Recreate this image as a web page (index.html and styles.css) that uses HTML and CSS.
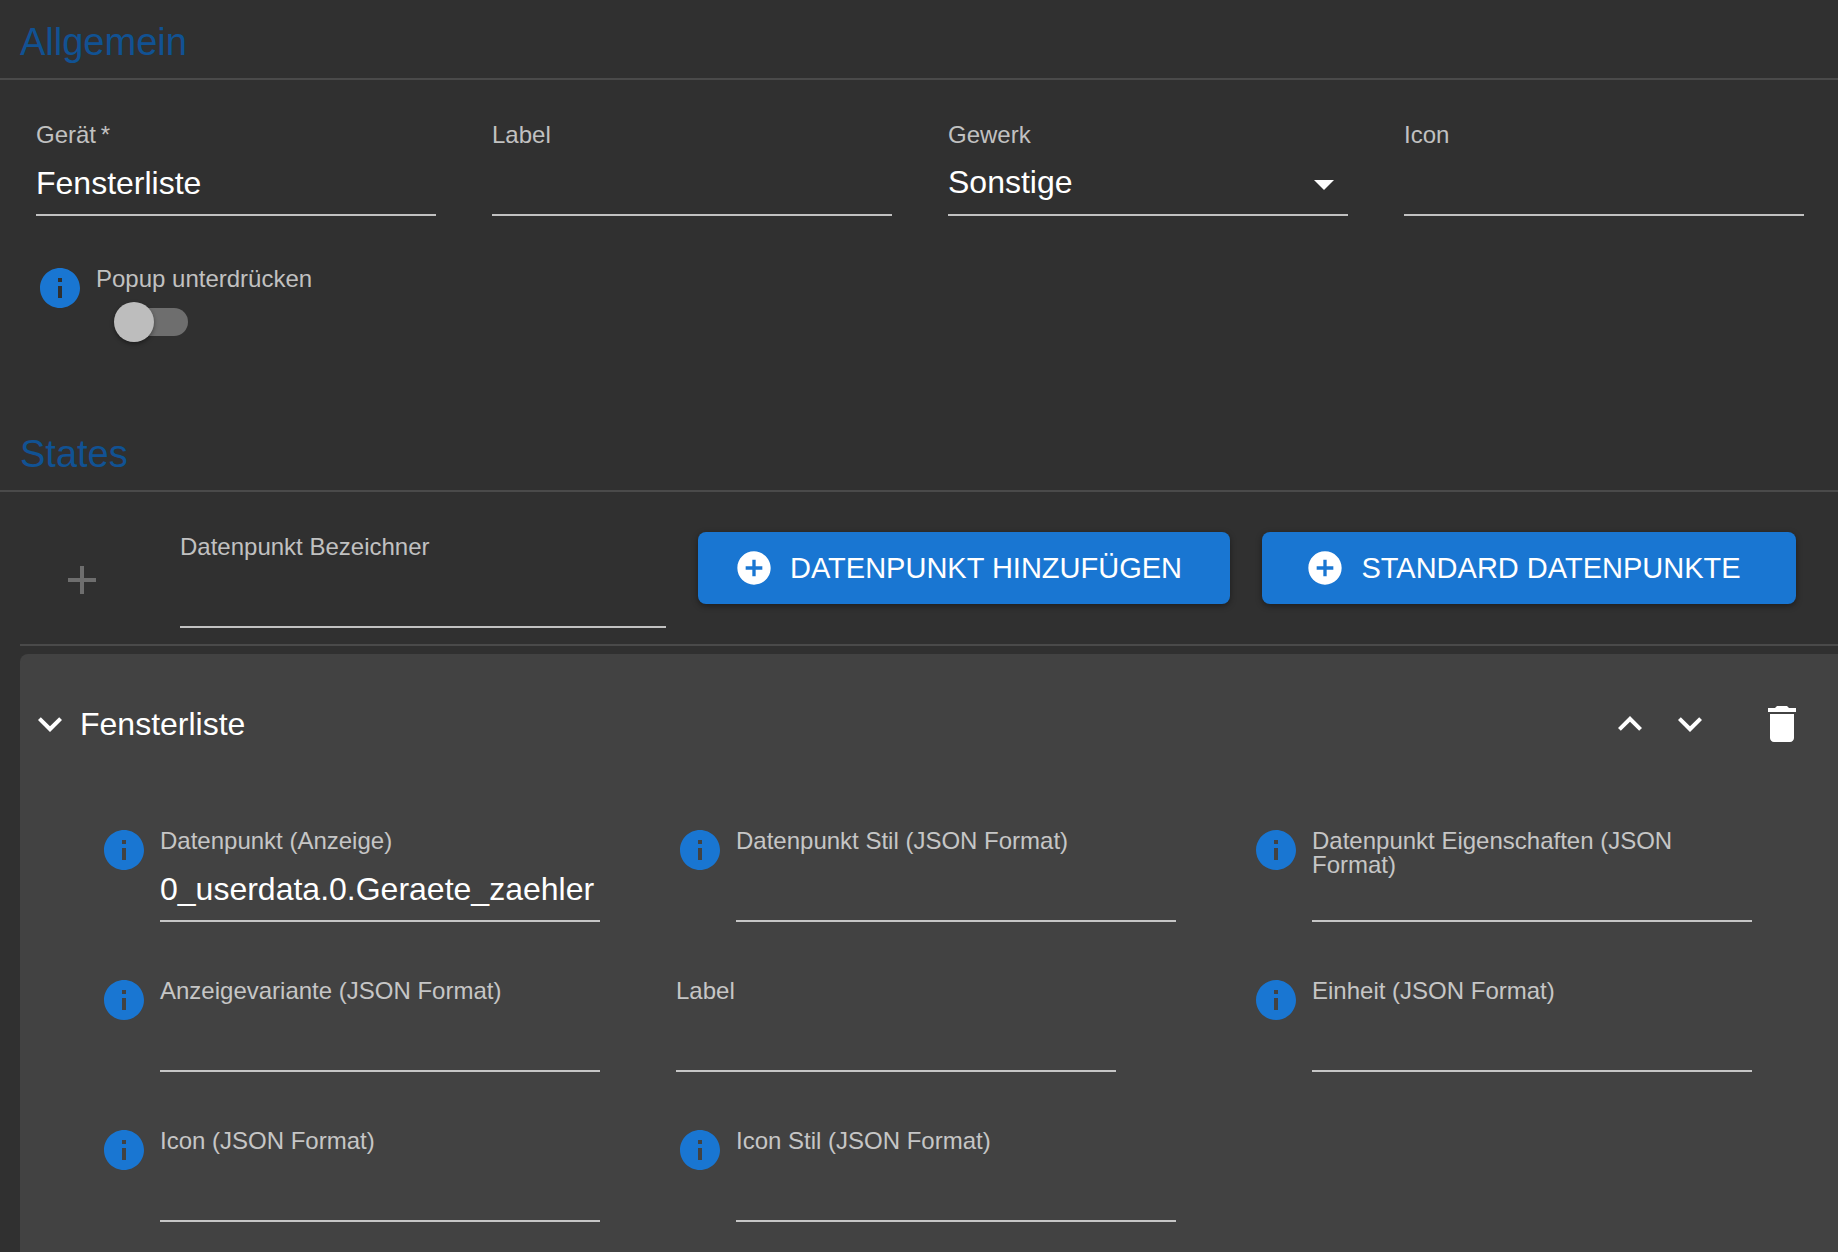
FILE: index.html
```html
<!DOCTYPE html>
<html lang="de">
<head>
<meta charset="utf-8">
<title>Allgemein</title>
<link rel="stylesheet" href="styles.css">
</head>
<body>
<svg class="sprite" aria-hidden="true">
  <symbol id="info" viewBox="0 0 24 24"><path d="M12 2C6.48 2 2 6.48 2 12s4.48 10 10 10 10-4.48 10-10S17.52 2 12 2zm1 15h-2v-6h2v6zm0-8h-2V7h2v2z"/></symbol>
  <symbol id="add" viewBox="0 0 24 24"><path d="M19 13h-6v6h-2v-6H5v-2h6V5h2v6h6v2z"/></symbol>
  <symbol id="add-circle" viewBox="0 0 24 24"><path d="M12 2C6.48 2 2 6.48 2 12s4.48 10 10 10 10-4.48 10-10S17.52 2 12 2zm5 11h-4v4h-2v-4H7v-2h4V7h2v4h4v2z"/></symbol>
  <symbol id="down" viewBox="0 0 24 24"><path d="M16.59 8.59L12 13.17 7.41 8.59 6 10l6 6 6-6z"/></symbol>
  <symbol id="up" viewBox="0 0 24 24"><path d="M12 8l-6 6 1.41 1.41L12 10.83l4.59 4.58L18 14z"/></symbol>
  <symbol id="delete" viewBox="0 0 24 24"><path d="M6 19c0 1.1.9 2 2 2h8c1.1 0 2-.9 2-2V7H6v12zM19 4h-3.5l-1-1h-5l-1 1H5v2h14V4z"/></symbol>
  <symbol id="dropdown" viewBox="0 0 24 24"><path d="M7 10l5 5 5-5z"/></symbol>
</svg>

<section>
  <h2 class="heading">Allgemein</h2>
  <div class="general">
    <div class="item"><div class="field"><label for="device">Gerät&thinsp;*</label><input id="device" type="text" value="Fensterliste"></div></div>
    <div class="item"><div class="field"><label for="label">Label</label><input id="label" type="text"></div></div>
    <div class="item"><div class="field">
      <label for="trade">Gewerk</label>
      <div class="select"><select id="trade"><option>Sonstige</option></select><svg class="icon"><use href="#dropdown"/></svg></div>
    </div></div>
    <div class="item"><div class="field"><label for="icon">Icon</label><input id="icon" type="text"></div></div>
    <div class="item">
      <svg class="icon info"><use href="#info"/></svg>
      <div class="field"><label for="popup">Popup unterdrücken</label><input class="switch" id="popup" type="checkbox"></div>
    </div>
  </div>
</section>

<section class="states">
  <h2 class="heading">States</h2>
  <div class="toolbar">
    <button class="icon-button" type="button" aria-label="Hinzufügen" disabled><svg class="icon"><use href="#add"/></svg></button>
    <div class="item"><div class="field"><label for="identifier">Datenpunkt Bezeichner</label><input id="identifier" type="text"></div></div>
    <button class="button" type="button"><svg class="button-icon"><use href="#add-circle"/></svg>DATENPUNKT HINZUFÜGEN</button>
    <button class="button" type="button"><svg class="button-icon"><use href="#add-circle"/></svg>STANDARD DATENPUNKTE</button>
  </div>
  <div class="panel">
    <header class="panel-header">
      <button class="toggle" type="button" aria-expanded="true"><svg class="icon"><use href="#down"/></svg>Fensterliste</button>
      <div class="move">
        <button class="icon-button" type="button" aria-label="Nach oben"><svg class="icon"><use href="#up"/></svg></button>
        <button class="icon-button" type="button" aria-label="Nach unten"><svg class="icon"><use href="#down"/></svg></button>
      </div>
      <button class="icon-button" type="button" aria-label="Löschen"><svg class="icon"><use href="#delete"/></svg></button>
    </header>
    <div class="properties">
      <div class="item"><svg class="icon info"><use href="#info"/></svg><div class="field"><label for="dp">Datenpunkt (Anzeige)</label><input id="dp" type="text" value="0_userdata.0.Geraete_zaehler"></div></div>
      <div class="item"><svg class="icon info"><use href="#info"/></svg><div class="field"><label for="dp-style">Datenpunkt Stil (JSON Format)</label><input id="dp-style" type="text"></div></div>
      <div class="item"><svg class="icon info"><use href="#info"/></svg><div class="field"><label for="dp-props">Datenpunkt Eigenschaften (JSON Format)</label><input id="dp-props" type="text"></div></div>
      <div class="item"><svg class="icon info"><use href="#info"/></svg><div class="field"><label for="variant">Anzeigevariante (JSON Format)</label><input id="variant" type="text"></div></div>
      <div class="item plain"><div class="field"><label for="dp-label">Label</label><input id="dp-label" type="text"></div></div>
      <div class="item"><svg class="icon info"><use href="#info"/></svg><div class="field"><label for="unit">Einheit (JSON Format)</label><input id="unit" type="text"></div></div>
      <div class="item"><svg class="icon info"><use href="#info"/></svg><div class="field"><label for="dp-icon">Icon (JSON Format)</label><input id="dp-icon" type="text"></div></div>
      <div class="item"><svg class="icon info"><use href="#info"/></svg><div class="field"><label for="dp-icon-style">Icon Stil (JSON Format)</label><input id="dp-icon-style" type="text"></div></div>
    </div>
  </div>
</section>
</body>
</html>
```

FILE: styles.css
```css
* {
  box-sizing: border-box;
}

body {
  margin: 0;
  min-height: 100vh;
  display: flex;
  flex-direction: column;
  background: #303030;
  color: #fff;
  font-family: "Liberation Sans", Arial, sans-serif;
  font-size: 32px;
}

input,
select,
button {
  margin: 0;
  padding: 0;
  border: 0;
  border-radius: 0;
  background: none;
  color: inherit;
  font: inherit;
  outline: none;
}

.sprite {
  display: none;
}

.icon {
  display: block;
  flex: none;
  width: 48px;
  height: 48px;
  fill: currentColor;
}

.info {
  color: #1976d2;
}

.heading {
  margin: 0;
  padding: 20px 20px 14px;
  border-bottom: 2px solid #4a4a4a;
  color: #115293;
  font-size: 38px;
  font-weight: 400;
  line-height: 44px;
}

.general {
  display: grid;
  grid-template-columns: repeat(4, minmax(0, 1fr));
  gap: 48px 56px;
  padding: 40px 34px 70px 36px;
}

/* A form cell: optional info icon, then the labelled control */
.item {
  display: flex;
  gap: 12px;
  min-width: 0;
}

.plain {
  margin-right: 60px;
}

.field {
  flex: 1;
  min-width: 0;
  min-height: 76px;
  padding-top: 3px;
  display: flex;
  flex-direction: column;
}

.field label {
  margin-bottom: -9px;
  color: #c1c1c1;
  font-size: 24px;
  line-height: 24px;
}

.field:has([type="text"], select) {
  min-height: 96px;
}

.field [type="text"],
.select {
  width: 100%;
  height: 52px;
  margin-top: auto;
  border-bottom: 2px solid #c1c1c1;
}

.field [type="text"] {
  padding-bottom: 12px;
}

.panel .field label {
  color: #c6c6c6;
}

.panel .field [type="text"] {
  border-color: #c6c6c6;
}

.select {
  display: grid;
}

.select > * {
  grid-area: 1 / 1;
}

.select select {
  appearance: none;
  padding: 0 48px 18px 0;
}

.select .icon {
  justify-self: end;
  margin-top: -4px;
  pointer-events: none;
}

.switch {
  appearance: none;
  display: grid;
  align-items: center;
  width: 76px;
  height: 40px;
  margin: 20px 18px 0;
}

.switch::before,
.switch::after {
  content: "";
  grid-area: 1 / 1;
}

.switch::before {
  width: 68px;
  height: 28px;
  margin-left: 6px;
  border-radius: 14px;
  background: #6e6e6e;
}

.switch::after {
  width: 40px;
  height: 40px;
  border-radius: 50%;
  background: #bdbdbd;
  box-shadow: 0 2px 4px rgba(0, 0, 0, 0.4);
}

.switch:checked::after {
  margin-left: 40px;
  background: #1976d2;
}

.states {
  flex: 1;
  display: flex;
  flex-direction: column;
}

.toolbar {
  display: grid;
  grid-template-columns: 132px minmax(0, 486fr) minmax(0, 532fr) minmax(0, 534fr);
  gap: 32px;
  align-items: start;
  padding: 40px 42px 16px 16px;
}

.icon-button {
  display: flex;
  align-items: center;
  justify-content: center;
}

.toolbar .icon-button {
  align-self: stretch;
}

.icon-button:disabled {
  color: #6e6e6e;
}

.button {
  display: flex;
  align-items: center;
  justify-content: center;
  gap: 16px;
  height: 72px;
  padding-right: 12px;
  border-radius: 8px;
  background: #1976d2;
  box-shadow: 0 2px 6px rgba(0, 0, 0, 0.4);
  font-size: 29px;
  white-space: nowrap;
}

.button-icon {
  width: 40px;
  height: 40px;
  fill: currentColor;
}

.panel {
  flex: 1;
  margin-left: 20px;
  padding-top: 8px;
  border-top: 2px solid #4a4a4a;
  display: flex;
  flex-direction: column;
}

.panel-header {
  display: flex;
  gap: 44px;
  padding: 46px 32px 78px 6px;
  border-top-left-radius: 8px;
  background: #424242;
}

.toggle {
  display: flex;
  align-items: center;
  gap: 6px;
  margin-right: auto;
}

.move {
  display: flex;
  gap: 12px;
}

.properties {
  flex: 1;
  display: grid;
  grid-template-columns: repeat(3, minmax(0, 1fr));
  align-content: start;
  gap: 54px 76px;
  padding: 0 86px 28px 80px;
  background: #424242;
}
```
